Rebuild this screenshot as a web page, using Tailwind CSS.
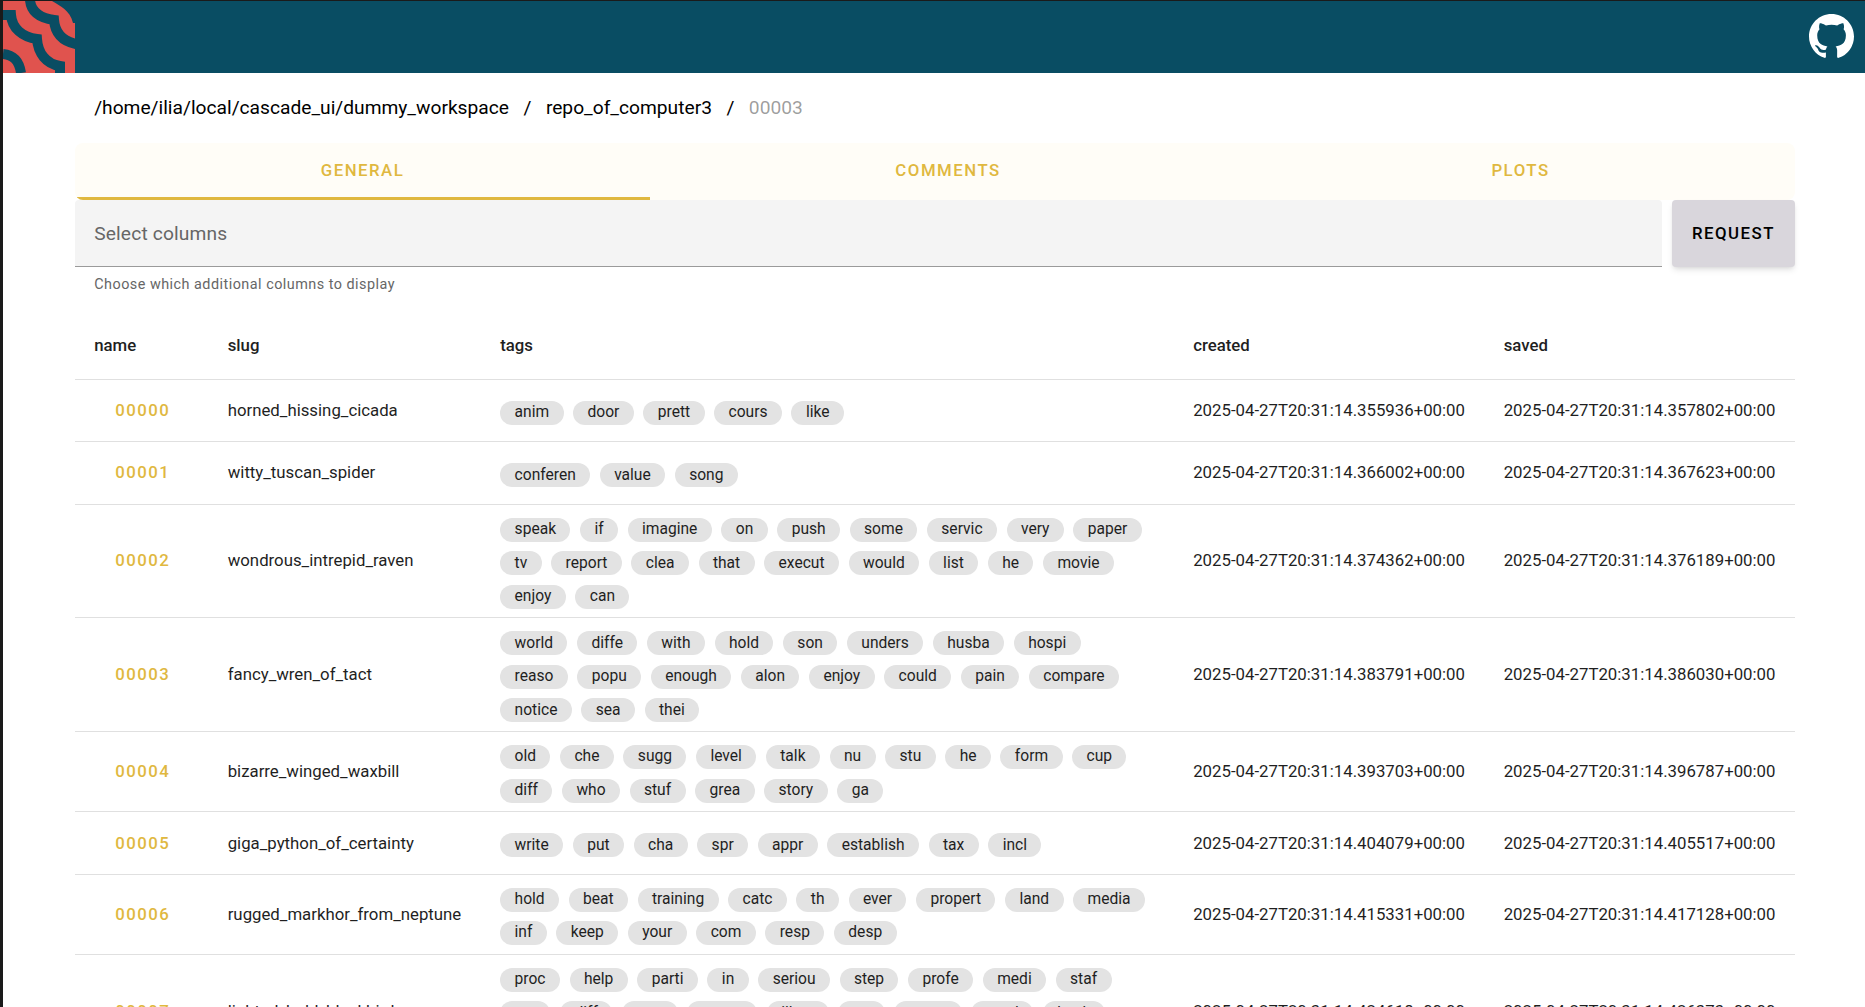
<!doctype html>
<html lang="en">
<head>
<meta charset="utf-8">
<title>Cascade UI</title>
<script src="https://cdn.jsdelivr.net/npm/@tailwindcss/browser@4"></script>
</head>
<body class="h-[1007px] overflow-hidden bg-white font-['Roboto',sans-serif] text-[#1f1f1f]">
<div class="flex h-[1007px] flex-col overflow-hidden border-t border-l-[3px] border-[#1a1a1a]">
  <header class="flex h-[72px] shrink-0 items-center justify-between bg-[#094d63]">
    <svg class="h-[72px] w-[72px]" viewBox="3 1 72 72" aria-hidden="true">
      <rect x="3" y="1" width="72" height="72" fill="#e0534e"/>
      <path d="M52 1C60 6 70 10 73 23H75V1Z" fill="#094d63"/>
      <g fill="none" stroke="#094d63" stroke-width="10">
        <path d="M30 0C31 12 40 18 54 20C55 33 62 41 76 44"/>
        <path d="M3 15H11C12 28 22 37 37 39C38 53 46 64 60 66L60 73"/>
        <path d="M3 54C13 55 19 60 21 73"/>
      </g>
    </svg>
    <svg class="mr-[11px] mb-[2px] h-[45px] w-[45px] fill-white" viewBox="0 0 16 16" aria-hidden="true"><path d="M8 0C3.58 0 0 3.58 0 8c0 3.54 2.29 6.53 5.47 7.59.4.07.55-.17.55-.38 0-.19-.01-.82-.01-1.49-2.01.37-2.53-.49-2.69-.94-.09-.23-.48-.94-.82-1.13-.28-.15-.68-.52-.01-.53.63-.01 1.08.58 1.23.82.72 1.21 1.87.87 2.33.66.07-.52.28-.87.51-1.07-1.78-.2-3.64-.89-3.64-3.95 0-.87.31-1.59.82-2.15-.08-.2-.36-1.02.08-2.12 0 0 .67-.21 2.2.82.64-.18 1.32-.27 2-.27.68 0 1.36.09 2 .27 1.53-1.04 2.2-.82 2.2-.82.44 1.1.16 1.92.08 2.12.51.56.82 1.27.82 2.15 0 3.07-1.87 3.75-3.65 3.95.29.25.54.73.54 1.48 0 1.07-.01 1.93-.01 2.2 0 .21.15.46.55.38A8.013 8.013 0 0016 8c0-4.42-3.58-8-8-8z"/></svg>
  </header>
  <main class="ml-[72px] mr-[70px] flex flex-col">
    <nav class="flex h-[70px] items-center pl-[19.2px] text-[19.2px] text-black">
      <span>/home/ilia/local/cascade_ui/dummy_workspace</span>
      <span class="mx-[14.5px]">/</span>
      <span>repo_of_computer3</span>
      <span class="mx-[14.5px]">/</span>
      <span class="text-black/40">00003</span>
    </nav>
    <div class="flex h-[57px] overflow-hidden rounded-lg bg-[#fffdf7] text-[16.8px] font-medium tracking-[1.5px] text-[#e0b83f]">
      <div class="flex w-[575px] items-center justify-center border-b-[3px] border-[#e0b83f] pt-[2px]">GENERAL</div>
      <div class="flex w-[596px] items-center justify-center pb-[1px]">COMMENTS</div>
      <div class="flex w-[549px] items-center justify-center pb-[1px]">PLOTS</div>
    </div>
    <div class="flex gap-[10px]">
      <div class="flex h-[67px] flex-1 items-center rounded-t border-b border-[#9a9a9a] bg-[#f4f4f4] pt-[2px] pl-[19.2px] text-[19.2px] tracking-[0.15px] text-[#666]">Select columns</div>
      <button class="h-[67px] w-[123px] rounded bg-[#d9d6dc] text-[16.8px] font-medium tracking-[1.5px] text-black shadow-md">REQUEST</button>
    </div>
    <p class="mt-[8px] pl-[19.2px] text-[14.4px] leading-[19px] tracking-[0.48px] text-[#666]">Choose which additional columns to display</p>
    <table class="mt-[18px] w-full table-fixed border-collapse text-[16.8px]">
      <colgroup><col class="w-[133.5px]"><col class="w-[272.5px]"><col class="w-[693px]"><col class="w-[310.5px]"><col></colgroup>
      <thead>
        <tr class="h-[67px] border-b border-[#e0e0e0] text-left *:pl-[19.2px] *:font-medium">
          <th>name</th><th>slug</th><th>tags</th><th>created</th><th>saved</th>
        </tr>
      </thead>
      <tbody>
        <tr class="h-[62px] border-b border-[#e0e0e0] *:pt-[2px] *:pl-[19.2px]">
          <td><span class="pl-[21px] font-medium tracking-[1.5px] text-[#e0b83f]">00000</span></td><td>horned_hissing_cicada</td>
          <td class="pt-0! pr-[19.2px]"><div class="flex flex-wrap py-[5px] text-[15.6px] *:mt-[7.5px] *:mr-[9.6px] *:mb-[2px] *:flex *:h-6 *:items-center *:rounded-full *:bg-[#e3e3e3] *:px-[14.4px]"><span>anim</span><span>door</span><span>prett</span><span>cours</span><span>like</span></div></td>
          <td>2025-04-27T20:31:14.355936+00:00</td><td>2025-04-27T20:31:14.357802+00:00</td>
        </tr>
        <tr class="h-[63px] border-b border-[#e0e0e0] *:pl-[19.2px]">
          <td><span class="pl-[21px] font-medium tracking-[1.5px] text-[#e0b83f]">00001</span></td><td>witty_tuscan_spider</td>
          <td class="pr-[19.2px]"><div class="flex flex-wrap py-[5px] text-[15.6px] *:mt-[7.5px] *:mr-[9.6px] *:mb-[2px] *:flex *:h-6 *:items-center *:rounded-full *:bg-[#e3e3e3] *:px-[14.4px]"><span>conferen</span><span>value</span><span>song</span></div></td>
          <td>2025-04-27T20:31:14.366002+00:00</td><td>2025-04-27T20:31:14.367623+00:00</td>
        </tr>
        <tr class="h-[113px] border-b border-[#e0e0e0] *:pl-[19.2px]">
          <td><span class="pl-[21px] font-medium tracking-[1.5px] text-[#e0b83f]">00002</span></td><td>wondrous_intrepid_raven</td>
          <td class="pr-[19.2px]"><div class="flex flex-wrap py-[5px] text-[15.6px] *:mt-[7.5px] *:mr-[9.6px] *:mb-[2px] *:flex *:h-6 *:items-center *:rounded-full *:bg-[#e3e3e3] *:px-[14.4px]"><span>speak</span><span>if</span><span>imagine</span><span>on</span><span>push</span><span>some</span><span>servic</span><span>very</span><span>paper</span><span>tv</span><span>report</span><span>clea</span><span>that</span><span>execut</span><span>would</span><span>list</span><span>he</span><span>movie</span><span>enjoy</span><span>can</span></div></td>
          <td>2025-04-27T20:31:14.374362+00:00</td><td>2025-04-27T20:31:14.376189+00:00</td>
        </tr>
        <tr class="h-[114px] border-b border-[#e0e0e0] *:pt-[2px] *:pl-[19.2px]">
          <td><span class="pl-[21px] font-medium tracking-[1.5px] text-[#e0b83f]">00003</span></td><td>fancy_wren_of_tact</td>
          <td class="pt-0! pr-[19.2px]"><div class="flex flex-wrap py-[5px] text-[15.6px] *:mt-[7.5px] *:mr-[9.6px] *:mb-[2px] *:flex *:h-6 *:items-center *:rounded-full *:bg-[#e3e3e3] *:px-[14.4px]"><span>world</span><span>diffe</span><span>with</span><span>hold</span><span>son</span><span>unders</span><span>husba</span><span>hospi</span><span>reaso</span><span>popu</span><span>enough</span><span>alon</span><span>enjoy</span><span>could</span><span>pain</span><span>compare</span><span>notice</span><span>sea</span><span>thei</span></div></td>
          <td>2025-04-27T20:31:14.383791+00:00</td><td>2025-04-27T20:31:14.386030+00:00</td>
        </tr>
        <tr class="h-[80px] border-b border-[#e0e0e0] *:pt-[2px] *:pl-[19.2px]">
          <td><span class="pl-[21px] font-medium tracking-[1.5px] text-[#e0b83f]">00004</span></td><td>bizarre_winged_waxbill</td>
          <td class="pt-0! pr-[19.2px]"><div class="flex flex-wrap py-[5px] text-[15.6px] *:mt-[7.5px] *:mr-[9.6px] *:mb-[2px] *:flex *:h-6 *:items-center *:rounded-full *:bg-[#e3e3e3] *:px-[14.4px]"><span>old</span><span>che</span><span>sugg</span><span>level</span><span>talk</span><span>nu</span><span>stu</span><span>he</span><span>form</span><span>cup</span><span>diff</span><span>who</span><span>stuf</span><span>grea</span><span>story</span><span>ga</span></div></td>
          <td>2025-04-27T20:31:14.393703+00:00</td><td>2025-04-27T20:31:14.396787+00:00</td>
        </tr>
        <tr class="h-[63px] border-b border-[#e0e0e0] *:pt-[2px] *:pl-[19.2px]">
          <td><span class="pl-[21px] font-medium tracking-[1.5px] text-[#e0b83f]">00005</span></td><td>giga_python_of_certainty</td>
          <td class="pt-0! pr-[19.2px]"><div class="flex flex-wrap py-[5px] text-[15.6px] *:mt-[7.5px] *:mr-[9.6px] *:mb-[2px] *:flex *:h-6 *:items-center *:rounded-full *:bg-[#e3e3e3] *:px-[14.4px]"><span>write</span><span>put</span><span>cha</span><span>spr</span><span>appr</span><span>establish</span><span>tax</span><span>incl</span></div></td>
          <td>2025-04-27T20:31:14.404079+00:00</td><td>2025-04-27T20:31:14.405517+00:00</td>
        </tr>
        <tr class="h-[80px] border-b border-[#e0e0e0] *:pt-[2px] *:pl-[19.2px]">
          <td><span class="pl-[21px] font-medium tracking-[1.5px] text-[#e0b83f]">00006</span></td><td>rugged_markhor_from_neptune</td>
          <td class="pt-0! pr-[19.2px] pb-[1px]"><div class="flex flex-wrap py-[5px] text-[15.6px] *:mt-[7.5px] *:mr-[9.6px] *:mb-[2px] *:flex *:h-6 *:items-center *:rounded-full *:bg-[#e3e3e3] *:px-[14.4px]"><span>hold</span><span>beat</span><span>training</span><span>catc</span><span>th</span><span>ever</span><span>propert</span><span>land</span><span>media</span><span>inf</span><span>keep</span><span>your</span><span>com</span><span>resp</span><span>desp</span></div></td>
          <td>2025-04-27T20:31:14.415331+00:00</td><td>2025-04-27T20:31:14.417128+00:00</td>
        </tr>
        <tr class="h-[113px] border-b border-[#e0e0e0] *:pt-[2px] *:pl-[19.2px]">
          <td><span class="pl-[21px] font-medium tracking-[1.5px] text-[#e0b83f]">00007</span></td><td>lighted_bold_blackbird</td>
          <td class="pt-0! pr-[19.2px]"><div class="flex flex-wrap py-[5px] text-[15.6px] *:mt-[7.5px] *:mr-[9.6px] *:mb-[2px] *:flex *:h-6 *:items-center *:rounded-full *:bg-[#e3e3e3] *:px-[14.4px]"><span>proc</span><span>help</span><span>parti</span><span>in</span><span>seriou</span><span>step</span><span>profe</span><span>medi</span><span>staf</span><span>ste</span><span>diff</span><span>trea</span><span>sense</span><span>illust</span><span>on</span><span>nurse</span><span>woul</span><span>back</span><span>pay</span></div></td>
          <td>2025-04-27T20:31:14.424618+00:00</td><td>2025-04-27T20:31:14.426373+00:00</td>
        </tr>
      </tbody>
    </table>
  </main>
</div>
</body>
</html>
